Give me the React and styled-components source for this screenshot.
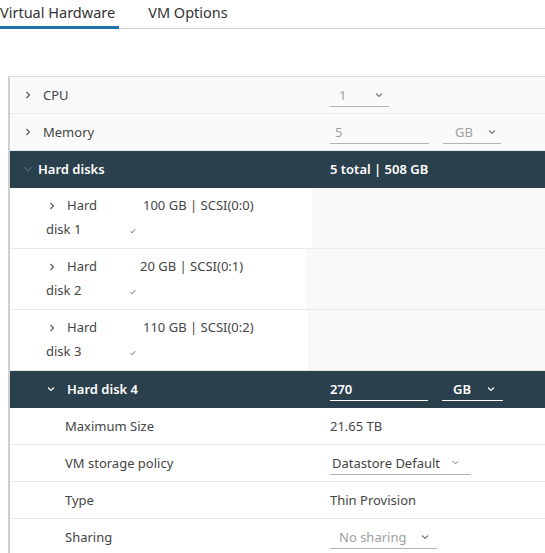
import React from 'react'
import styled, { createGlobalStyle } from 'styled-components'

const Global = createGlobalStyle`
    html, body { margin: 0; padding: 0; background: #fff; }
    body {
        font-family: "Noto Sans", "Open Sans", sans-serif;
        font-size: 13px;
        color: #454545;
        width: 545px;
        height: 553px;
        overflow: hidden;
    }
`

// Tabs
const Tabs = styled.div`
    display: flex;
    height: 28px;
    border-bottom: 1px solid #cccccc;
`
const Tab = styled.div`
    position: relative;
    padding: ${p => p.first ? '0 4px 0 0' : '0 0 0 29px'};
    font-size: 14.5px;
    line-height: 24px;
    color: #333;
    ${p => p.active && `
        &:after {
            content: '';
            position: absolute;
            left: 0; right: 0; bottom: -1px;
            height: 3px;
            background: #1f72a6;
        }
    `}
`

// Panel
const Panel = styled.div`
    margin: 47px 0 0 8px;
    border-top: 1px solid #dcdcdc;
    border-left: 2px solid #cfcfcf;
`
const Row = styled.div`
    display: grid;
    grid-template-columns: 320px 1fr;
    align-items: center;
    height: 37px;
    box-sizing: border-box;
    background: ${p => p.dark ? '#2a404d' : p.shade ? '#fafafa' : '#fff'};
    color: ${p => p.dark ? '#fff' : '#454545'};
    font-weight: ${p => p.dark ? 600 : 400};
    border-bottom: 1px solid ${p => p.dark ? '#2a404d' : '#e9e9e9'};
`
const Label = styled.div`
    display: flex;
    align-items: center;
    padding-left: ${p => p.indent || 0}px;
    gap: ${p => p.gap || 10}px;
`
const Value = styled.div`
    display: flex;
    align-items: center;
    gap: 14px;
`
const Field = styled.div`
    display: flex;
    align-items: center;
    justify-content: space-between;
    box-sizing: border-box;
    width: ${p => p.w}px;
    height: 24px;
    padding: 0 ${p => p.pr || 0}px 0 ${p => p.pl || 0}px;
    border-bottom: 1px solid ${p => p.light ? '#ffffff' : '#b3b3b3'};
    color: ${p => p.muted ? '#a0a0a0' : 'inherit'};
    font-weight: ${p => p.light ? 600 : 400};
`

// Disk rows
const DiskRow = styled.div`
    display: grid;
    grid-template-columns: ${p => p.split}px 1fr;
    height: 61px;
    border-bottom: 1px solid #e9e9e9;
    box-sizing: border-box;
`
const DiskLeft = styled.div`
    display: grid;
    grid-template-columns: 120px 1fr;
    align-content: start;
    padding-top: 5px;
    background: #fff;
    line-height: 24px;
`
const DiskName = styled.div`
    padding-left: 36px;
    width: 66px;
    color: #454545;
    svg { margin: 0 11px 0 2px; }
`
const DiskInfo = styled.div`
    display: flex;
    flex-direction: column;
`
const DiskSize = styled.span`
    padding-left: ${p => p.off}px;
`
const DiskRight = styled.div`
    background: #f8f8f8;
`

const Chevron = ({ dir = 'right', color = '#555', size = 8 }) => (
    <svg width={size} height={size} viewBox="0 0 8 8" style={{ flex: 'none' }}>
        {dir === 'right'
            ? <polyline points="2.5,1 5.5,4 2.5,7" fill="none" stroke={color} strokeWidth="1.1" />
            : <polyline points="1,2.5 4,5.5 7,2.5" fill="none" stroke={color} strokeWidth="1.1" />}
    </svg>
)

const Check = () => (
    <svg width="6" height="6" viewBox="0 0 6 6">
        <polyline points="0.8,3.4 2,4.8 5.2,1.2" fill="none" stroke="#555" strokeWidth="0.9" />
    </svg>
)

const disks = [
    { n: 1, size: '100 GB | SCSI(0:0)', split: 302, off: 13 },
    { n: 2, size: '20 GB | SCSI(0:1)', split: 296, off: 10 },
    { n: 3, size: '110 GB | SCSI(0:2)', split: 298, off: 13 },
]

const details = [
    ['Maximum Size', '21.65 TB'],
    ['VM storage policy', 'select'],
    ['Type', 'Thin Provision'],
    ['Sharing', 'sharing'],
]

const App = () => {
    return (
        <>
            <Global />
            <Tabs>
                <Tab first active>Virtual Hardware</Tab>
                <Tab>VM Options</Tab>
            </Tabs>
            <Panel>
                <Row shade>
                    <Label indent={14} gap={11}><Chevron />CPU</Label>
                    <Value>
                        <Field w={59} pl={9} pr={6} muted>1<Chevron dir="down" color="#777" /></Field>
                    </Value>
                </Row>
                <Row shade>
                    <Label indent={14} gap={11}><Chevron />Memory</Label>
                    <Value>
                        <Field w={99} pl={5} muted>5</Field>
                        <Field w={58} pl={12} pr={5} muted>GB<Chevron dir="down" color="#777" /></Field>
                    </Value>
                </Row>
                <Row dark>
                    <Label indent={13} gap={5}><Chevron dir="down" color="#52646f" size={10} />Hard disks</Label>
                    <Value>5 total | 508 GB</Value>
                </Row>
                {disks.map(d => (
                    <DiskRow key={d.n} split={d.split}>
                        <DiskLeft>
                            <DiskName><Chevron />Hard disk {d.n}</DiskName>
                            <DiskInfo>
                                <DiskSize off={d.off}>{d.size}</DiskSize>
                                <span><Check /></span>
                            </DiskInfo>
                        </DiskLeft>
                        <DiskRight />
                    </DiskRow>
                ))}
                <Row dark>
                    <Label indent={37} gap={12}><Chevron dir="down" color="#fff" />Hard disk 4</Label>
                    <Value>
                        <Field w={98} light>270</Field>
                        <Field w={61} pl={11} pr={8} light>GB<Chevron dir="down" color="#fff" /></Field>
                    </Value>
                </Row>
                {details.map(([k, v]) => (
                    <Row key={k}>
                        <Label indent={55}>{k}</Label>
                        <Value>
                            {v === 'select' && <Field w={141} pl={2} pr={12}>Datastore Default<Chevron dir="down" color="#666" size={7} /></Field>}
                            {v === 'sharing' && <Field w={107} pl={9} pr={8} muted>No sharing<Chevron dir="down" color="#777" /></Field>}
                            {v !== 'select' && v !== 'sharing' && v}
                        </Value>
                    </Row>
                ))}
            </Panel>
        </>
    )
}

export default App
